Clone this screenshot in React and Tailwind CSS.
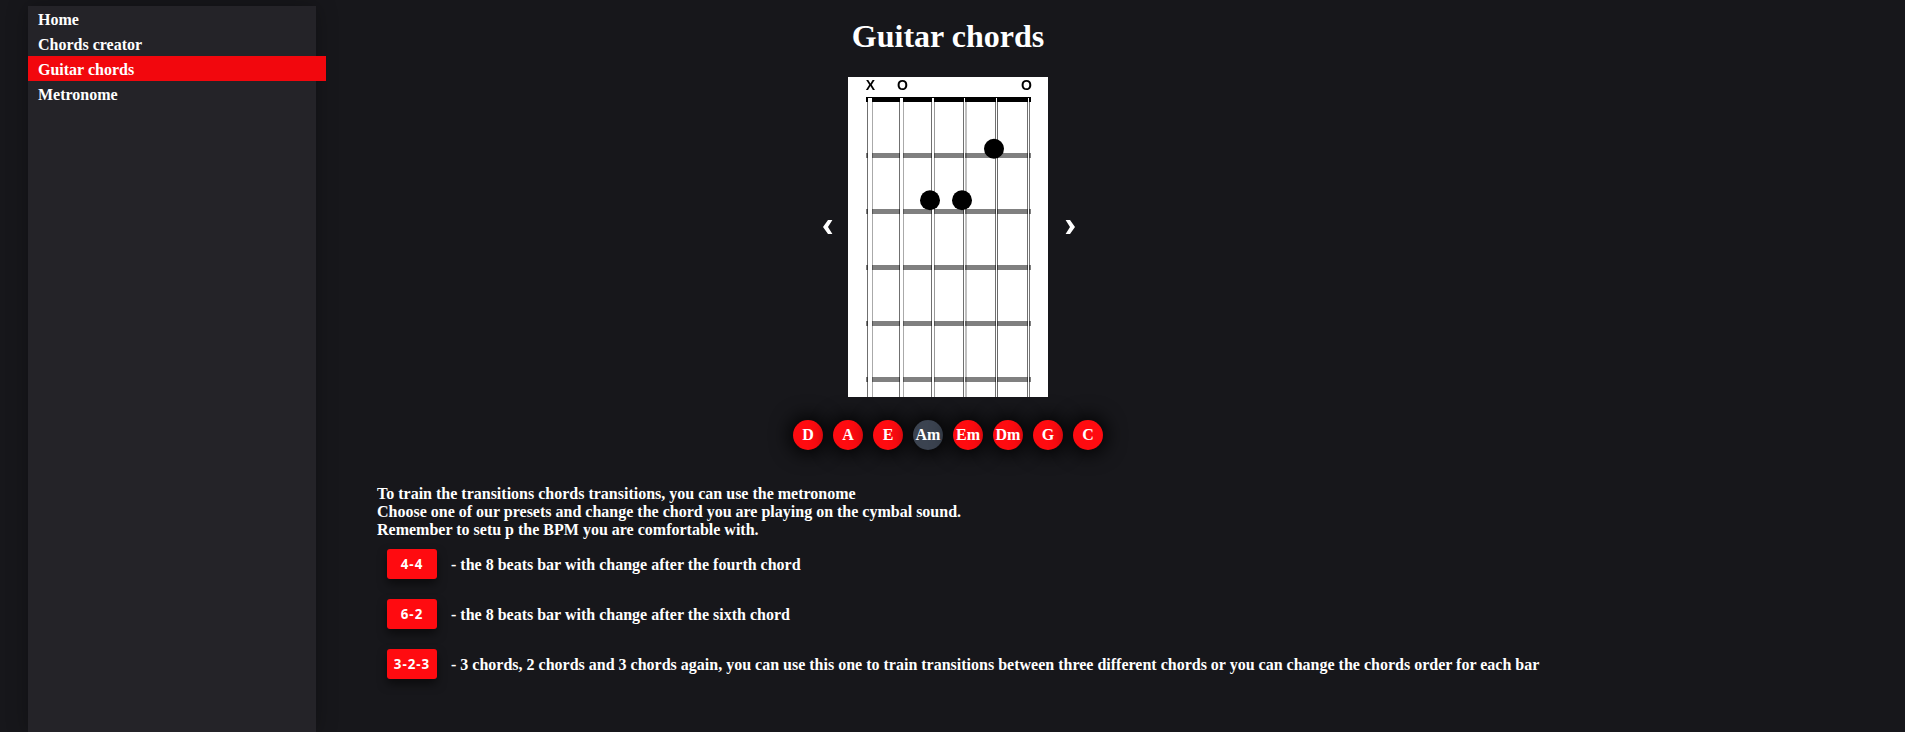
const nav = ["Home", "Chords creator", "Guitar chords", "Metronome"];
const chords = ["D", "A", "E", "Am", "Em", "Dm", "G", "C"];
const presets = [
  ["4-4", "- the 8 beats bar with change after the fourth chord"],
  ["6-2", "- the 8 beats bar with change after the sixth chord"],
  ["3-2-3", "- 3 chords, 2 chords and 3 chords again, you can use this one to train transitions between three different chords or you can change the chords order for each bar"],
];
// Each string: left edge, gap between its outlines, right outline width and colour.
const strings = [
  [19, 4, 1, "#aaa"], [51, 3, 1, "#aaa"], [83, 2, 1, "#999"], [115, 1, 2, "#c0c0c0"], [147, 1, 1, "#6a6a6a"], [179, 1, 1, "#777"],
];

function Fretboard() {
  return (
    <svg width="200" height="320" viewBox="0 0 200 320" shapeRendering="crispEdges" className="isolate block bg-white">
      <rect width="200" height="320" fill="#fff" />
      <g fontFamily="Liberation Sans" fontSize="14" fontWeight="700" textAnchor="middle" shapeRendering="auto">
        <text x="22.5" y="13">X</text>
        <text x="54.5" y="13">O</text>
        <text x="178.5" y="13">O</text>
      </g>
      <rect x="18" y="20" width="165" height="5" fill="#000" />
      {[76, 132, 188, 244, 300].map((y) => (
        <rect key={y} x="18" y={y} width="165" height="5" fill="#808080" />
      ))}
      {strings.map(([x, gap, w, color]) => (
        <g key={x}>
          <rect x={x + 1} y="21" width={gap} height="299" fill="#fff" />
          <rect x={x} y="21" width="1" height="299" fill="#707070" className="mix-blend-multiply" />
          <rect x={x + 1 + gap} y="21" width={w} height="299" fill={color} className="mix-blend-multiply" />
        </g>
      ))}
      <g shapeRendering="auto">
        <circle cx="146" cy="71.7" r="10" />
        <circle cx="82" cy="123.2" r="10" />
        <circle cx="114" cy="123.2" r="10" />
      </g>
    </svg>
  );
}

function Arrow({ className }) {
  return (
    <svg width="10" height="14" viewBox="0 0 10 14" fill="#fff" className={className}>
      <path d="M5 0H9.4L5 7L9.4 14H5L0 7Z" />
    </svg>
  );
}

export default function App() {
  return (
    <div className="flex h-[732px] w-full overflow-hidden bg-[#17171b] pl-7 pt-1.5 font-['Liberation_Serif',serif] text-base font-bold text-white">
      <nav className="w-72 shrink-0 bg-[#242328] shadow-[0_0_20px_rgba(0,0,0,0.3)]">
        {nav.map((n) => (
          <a key={n} className={n === "Guitar chords" ? "block h-[25px] w-[298px] bg-[#f2070d] pl-2.5 leading-[27px]" : "block h-[25px] pl-2.5 leading-[27px]"}>{n}</a>
        ))}
      </nav>
      <main className="ml-[61px] w-[1142px] shrink-0">
        <h1 className="mt-3 h-[38px] text-center text-[32px] leading-[37px]">Guitar chords</h1>
        <div className="mt-[21px] flex items-center justify-center">
          <button className="flex w-10 justify-center pb-5"><Arrow className="block" /></button>
          <Fretboard />
          <button className="flex w-10 justify-center pb-5 pl-[3px]"><Arrow className="block -scale-x-100" /></button>
        </div>
        <div className="mt-[23px] flex justify-center gap-2.5">
          {chords.map((c) => (
            <span key={c} className={c === "Am" ? "flex size-[30px] items-center justify-center rounded-full bg-[#3b4350] shadow-[0_0_20px_3px_rgba(0,0,0,1)]" : "flex size-[30px] items-center justify-center rounded-full bg-[#ff0b10] shadow-[0_0_20px_3px_rgba(0,0,0,1)]"}><span className="relative">{c}</span></span>
          ))}
        </div>
        <div className="mt-[35px] leading-[18px]">
          <p>To train the transitions chords transitions, you can use the metronome</p>
          <p>Choose one of our presets and change the chord you are playing on the cymbal sound.</p>
          <p>Remember to setu p the BPM you are comfortable with.</p>
        </div>
        <div className="ml-2.5 mt-2.5 flex flex-col gap-5">
          {presets.map(([k, t]) => (
            <div key={k} className="flex h-[30px] items-center whitespace-nowrap">
              <button className="mr-3.5 h-[30px] w-[50px] shrink-0 rounded-[3px] bg-[#ff0b10] pt-px font-['Open_Sans',sans-serif] text-[13.33px] font-bold tracking-[1px] shadow-[0_5px_10px_rgba(0,0,0,0.5)]">{k}</button>
              <span className="pt-px">{t}</span>
            </div>
          ))}
        </div>
      </main>
    </div>
  );
}
